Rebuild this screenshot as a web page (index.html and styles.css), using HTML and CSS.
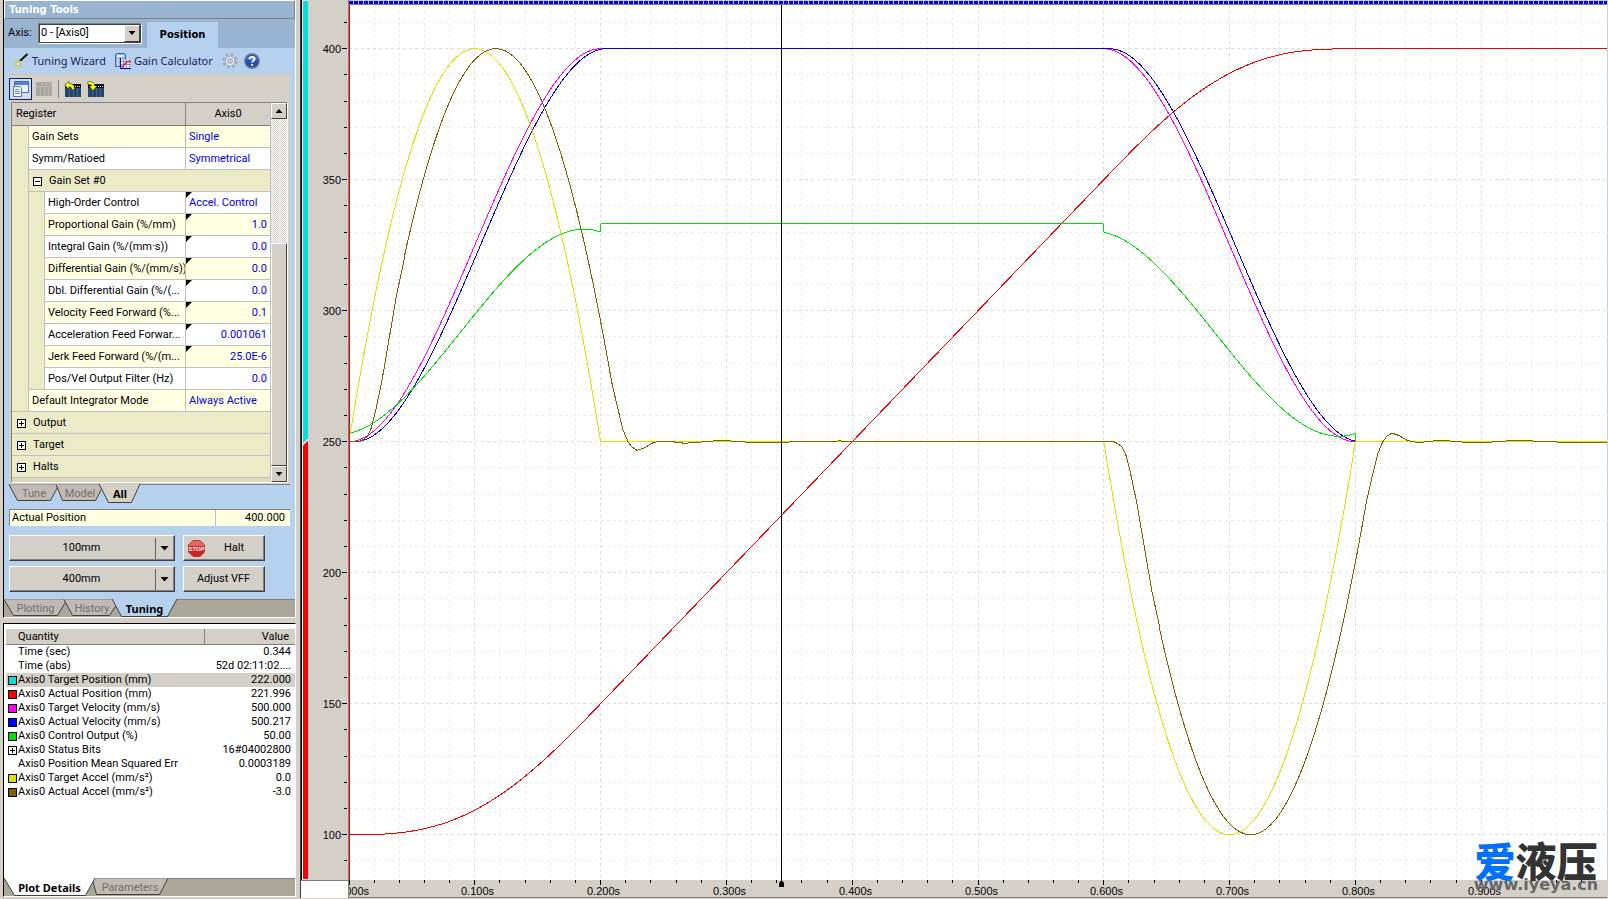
FILE: index.html
```html
<!DOCTYPE html>
<html lang="en">
<head>
<meta charset="utf-8">
<title>Tuning Tools</title>
<link rel="stylesheet" href="styles.css">
</head>
<body>
<div class="app">
  <aside class="side">
    <section class="panel tuning">
      <h1 class="title">Tuning Tools</h1>
      <div class="axis-bar">
        <label for="axis">Axis:</label>
        <span class="combo">
          <select id="axis"><option>0 - [Axis0]</option></select>
          <span class="combo-arrow"><i class="down"></i></span>
        </span>
        <button class="mode-tab">Position</button>
      </div>
      <div class="links">
        <button class="link">
          <svg width="16" height="16" viewBox="0 0 16 16"><path d="M7 8L14.500 1" stroke="#111" stroke-width="2"/><path d="M5 7v8M1 11h8M2 8l6 6M8 8l-6 6" stroke="#d8c21c"/><path d="M4 10h2v2H4z" fill="#fff9a8"/></svg>
          Tuning Wizard
        </button>
        <button class="link">
          <svg width="16" height="16" viewBox="0 0 16 16"><path d="M.5 1.500l1-1h8l1 1v12h-10z" fill="#8db0e0" stroke="#4068b0"/><path d="M2 2h7v2H2z" fill="#f4f8ff"/><path d="M2 6h2M5 6h2M2 8h2M2 10h2M2 12h2" stroke="#fff"/><path d="M5.500 6.500h10v8h-10z" fill="#fff"/><path d="M5.500 5v10.500H16M5 8.500h11M5 11.500h11M8.500 6v9M11.500 6v9M14.500 6v9" stroke="#8c8ce0" fill="none"/><path d="M5 13.500h3l3-4 2-1h3" stroke="#d01818" stroke-width="1.300" fill="none"/><path d="M5.500 5v10.500H16" stroke="#0000c8" fill="none"/></svg>
          Gain Calculator
        </button>
        <button class="tool" aria-label="Options">
          <svg width="16" height="16" viewBox="0 0 16 16"><circle cx="8" cy="8" r="6.500" fill="none" stroke="#a2a9b4" stroke-width="2.500" stroke-dasharray="2.600 2.500"/><circle cx="8" cy="8" r="4.800" fill="#e8ecf2" stroke="#a2a9b4"/><circle cx="8" cy="8" r="2.400" fill="#b5d1ee" stroke="#a2a9b4"/></svg>
        </button>
        <button class="tool" aria-label="Help">
          <svg width="16" height="16" viewBox="0 0 16 16"><circle cx="8" cy="8" r="7.300" fill="#2450b0" stroke="#7c8698" stroke-width="1.400"/><path d="M2.500 6a6 5 0 0 1 11 0q-5 2-11 0z" fill="#5b86dc"/><path d="M5.600 6.200q.2-2.300 2.500-2.300 2.400.1 2.400 2 0 1.200-1.300 1.900-1 .6-1 1.700M8.100 11v1.800" fill="none" stroke="#fff" stroke-width="1.900"/></svg>
        </button>
      </div>
      <div class="register">
        <div class="toolbar">
          <button class="tool on" aria-label="Tree view">
            <svg width="17" height="16" viewBox="0 0 17 16"><path d="M2.500.5h14v11h-14z" fill="#eef4fc" stroke="#3d6cc0"/><path d="M3 1h13v3H3z" fill="#4f86dc"/><path d="M1.500 5.500h6l2 2v8h-8z" fill="#f4f6fa" stroke="#5a79ac"/><path d="M3 8.500h4M3 10.500h5M3 12.500h5" stroke="#7088a8"/></svg>
          </button>
          <button class="tool" aria-label="Plot view" disabled>
            <svg width="17" height="14" viewBox="0 0 17 14"><path d="M1 0h16v14H1z" fill="#a8a6a2"/><path d="M1 4.500h16M5.500 4v10M9.500 4v10M13.500 4v10" stroke="#bab7b2"/><path d="M7 2h1M11 2h1M15 2h1" stroke="#eee"/></svg>
          </button>
          <i class="sep"></i>
          <button class="tool" aria-label="Upload">
            <svg width="17" height="16" viewBox="0 0 17 16"><path d="M1 3h16v13H1z" fill="#24466c"/><path d="M5.500 7v9M9.500 7v9M13.500 7v9" stroke="#3f6894"/><path d="M1 3h16v4H1z" fill="#111"/><path d="M11 5.500h1M13 5.500h1M15 5.500h1" stroke="#ddd"/><path d="M.6 4.300L5 .4V2.700q6-.5 5.500 6H7.700q0-3.300-2.700-3v2.500z" fill="#ff0" stroke="#222" stroke-width=".5"/></svg>
          </button>
          <button class="tool" aria-label="Download">
            <svg width="17" height="16" viewBox="0 0 17 16"><path d="M1 3h16v13H1z" fill="#24466c"/><path d="M5.500 7v9M9.500 7v9M13.500 7v9" stroke="#3f6894"/><path d="M1 3h16v4H1z" fill="#111"/><path d="M11 5.500h1M13 5.500h1M15 5.500h1" stroke="#ddd"/><path d="M.8.6Q7.700 0 7.700 5h2.500L6 9.400 2 5h2.700Q5 3.200.8 3.400z" fill="#ff0" stroke="#222" stroke-width=".5"/></svg>
          </button>
        </div>
        <div class="grid-frame">
          <table class="regs">
            <colgroup><col class="c-first"><col class="c-ind"><col><col class="c-val"></colgroup>
            <thead><tr><th colspan="3">Register</th><th class="mid">Axis0</th></tr></thead>
            <tbody>
              <tr class="odd"><td class="ind" rowspan="13"></td><td colspan="2">Gain Sets</td><td class="val">Single</td></tr>
              <tr><td colspan="2">Symm/Ratioed</td><td class="val">Symmetrical</td></tr>
              <tr><td class="group" colspan="3"><button class="twist minus" aria-label="Collapse"></button>Gain Set #0</td></tr>
              <tr><td class="ind" rowspan="9"></td><td>High-Order Control</td><td class="val mark">Accel. Control</td></tr>
              <tr class="odd"><td>Proportional Gain (%/mm)</td><td class="val num mark">1.0</td></tr>
              <tr><td>Integral Gain (%/(mm·s))</td><td class="val num mark">0.0</td></tr>
              <tr class="odd"><td>Differential Gain (%/(mm/s))</td><td class="val num mark">0.0</td></tr>
              <tr><td>Dbl. Differential Gain (%/(...</td><td class="val num mark">0.0</td></tr>
              <tr class="odd"><td>Velocity Feed Forward (%...</td><td class="val num mark">0.1</td></tr>
              <tr><td>Acceleration Feed Forwar...</td><td class="val num mark">0.001061</td></tr>
              <tr class="odd"><td>Jerk Feed Forward (%/(m...</td><td class="val num mark">25.0E-6</td></tr>
              <tr><td>Pos/Vel Output Filter (Hz)</td><td class="val num">0.0</td></tr>
              <tr class="odd"><td colspan="2">Default Integrator Mode</td><td class="val">Always Active</td></tr>
              <tr><td class="group" colspan="4"><button class="twist" aria-label="Expand"></button>Output</td></tr>
              <tr><td class="group" colspan="4"><button class="twist" aria-label="Expand"></button>Target</td></tr>
              <tr><td class="group" colspan="4"><button class="twist" aria-label="Expand"></button>Halts</td></tr>
            </tbody>
          </table>
          <div class="scroll">
            <button class="sbtn" aria-label="Scroll up"><i class="up"></i></button>
            <div class="track"></div>
            <div class="thumb"></div>
            <button class="sbtn" aria-label="Scroll down"><i class="down"></i></button>
          </div>
        </div>
      </div>
      <div class="sheets inner">
        <button class="sheet w50"><svg width="50" height="18"><path class="off" d="M0 .5L8.500 16.500H41.500L50 .5"/></svg><span>Tune</span></button>
        <button class="sheet w48"><svg width="48" height="18"><path class="off" d="M0 .5L6.500 16.500H39.500L48 .5"/></svg><span>Model</span></button>
        <button class="sheet w42 active"><svg width="42" height="20"><path class="grey" d="M0 0L9.500 18.500H32.500L41 0"/></svg><span>All</span></button>
      </div>
      <div class="readout"><span>Actual Position</span><output>400.000</output></div>
      <div class="actions">
        <button class="push split"><span>100mm</span><i class="bar"></i><i class="down big"></i></button>
        <button class="push halt">
          <svg width="17" height="17" viewBox="0 0 17 17"><path d="M5 .5h7L16.500 5v7L12 16.500H5L.5 12V5z" fill="#d82020" stroke="#a84040"/><path d="M5 1h7l4 4v1H1V5z" fill="#ea6464"/><text class="stop" x="8.500" y="11">STOP</text></svg>
          <span>Halt</span>
        </button>
        <button class="push split"><span>400mm</span><i class="bar"></i><i class="down big"></i></button>
        <button class="push"><span>Adjust VFF</span></button>
      </div>
      <div class="sheets strip">
        <button class="sheet w63"><svg width="63" height="18"><path class="off" d="M0 .5L9.500 16.500H53.500L63 .5"/></svg><span>Plotting</span></button>
        <button class="sheet w56"><svg width="56" height="18"><path class="off" d="M0 .5L8.500 16.500H45.500L56 .5"/></svg><span>History</span></button>
        <button class="sheet w65 active"><svg width="65" height="18"><path class="blue" d="M0 0L9.500 17.500H55.500L65 0"/></svg><span>Tuning</span></button>
      </div>
    </section>

    <section class="panel details">
      <table class="quant">
        <colgroup><col class="q-ico"><col><col class="q-val"></colgroup>
        <thead><tr><th colspan="2">Quantity</th><th class="right">Value</th></tr></thead>
        <tbody>
          <tr><td></td><td>Time (sec)</td><td class="right">0.344</td></tr>
          <tr><td></td><td>Time (abs)</td><td class="right">52d 02:11:02....</td></tr>
          <tr class="sel"><td><i class="chip cyan"></i></td><td>Axis0 Target Position (mm)</td><td class="right">222.000</td></tr>
          <tr><td><i class="chip red"></i></td><td>Axis0 Actual Position (mm)</td><td class="right">221.996</td></tr>
          <tr><td><i class="chip magenta"></i></td><td>Axis0 Target Velocity (mm/s)</td><td class="right">500.000</td></tr>
          <tr><td><i class="chip blue"></i></td><td>Axis0 Actual Velocity (mm/s)</td><td class="right">500.217</td></tr>
          <tr><td><i class="chip green"></i></td><td>Axis0 Control Output (%)</td><td class="right">50.00</td></tr>
          <tr><td><button class="twist" aria-label="Expand"></button></td><td>Axis0 Status Bits</td><td class="right">16#04002800</td></tr>
          <tr><td></td><td>Axis0 Position Mean Squared Err</td><td class="right">0.0003189</td></tr>
          <tr><td><i class="chip yellow"></i></td><td>Axis0 Target Accel (mm/s²)</td><td class="right">0.0</td></tr>
          <tr><td><i class="chip brown"></i></td><td>Axis0 Actual Accel (mm/s²)</td><td class="right">-3.0</td></tr>
        </tbody>
      </table>
      <div class="sheets strip">
        <button class="sheet w91 active"><svg width="91" height="18"><path class="white" d="M0 0L10.500 17.500H81.500L91 0"/></svg><span>Plot Details</span></button>
        <button class="sheet w76"><svg width="76" height="18"><path class="off" d="M0 .5L4.500 16.500H67.500L76 .5"/></svg><span>Parameters</span></button>
      </div>
    </section>
  </aside>

  <main class="chart">
    <div class="bands"><i class="band top"></i><i class="band bottom"></i></div>
    <svg class="y-axis" id="yaxis"></svg>
    <div class="plot-col">
      <div class="samples"></div>
      <svg class="plot" id="plot"></svg>
    </div>
    <div class="corner"></div>
    <svg class="x-axis" id="xaxis"></svg>
    <div class="logo"><div class="logo-cn"><b>爱</b>液压</div><div class="logo-url">www.iyeya.cn</div></div>
  </main>
</div>
<script src="plot.js"></script>
</body>
</html>
```

FILE: styles.css
```css
* { box-sizing: border-box; }
html, body { height: 100%; }
body {
  margin: 0;
  background: #d4d0c8;
  color: #000;
  font: 11px/14px Roboto, "Noto Sans", sans-serif;
  overflow: hidden;
}
button, select, output { font: inherit; color: inherit; }
button { padding: 0; border: 0; background: none; }
svg { display: block; }
.app { display: flex; height: 100vh; }

/* left column */
.side { flex: none; width: 300px; padding: 0 4px 0 3px; display: flex; flex-direction: column; gap: 5px; }
.panel { border-left: 1px solid #000; border-right: 1px solid #fff; border-bottom: 1px solid #fff; display: flex; flex-direction: column; }
.tuning { background: #b5d1ee; }
.details { flex: 1; background: #fff; border-top: 1px solid #000; min-height: 0; margin-bottom: 2px; }
.title {
  margin: 0; height: 19px; padding: 0 4px; background: #99b4d1; color: #fff;
  border: 1px solid #fff; border-right-color: #808080; border-bottom-color: #808080;
  font-size: 10px; font-weight: bold; line-height: 18px; font-family: "DejaVu Sans", sans-serif;
}
.axis-bar { height: 29px; background: #99b4d1; display: flex; align-items: center; padding: 0 0 1px 4px; }
.axis-bar label { width: 30px; }
.combo { position: relative; width: 104px; height: 21px; }
.combo select {
  width: 100%; height: 100%; appearance: none; border: 1px solid; border-color: #808080 #fff #fff #808080;
  outline: 1px solid #404040; outline-offset: -2px; background: #fff; padding: 0 2px; border-radius: 0;
}
.combo-arrow {
  position: absolute; right: 2px; top: 2px; bottom: 2px; width: 16px; pointer-events: none;
  display: grid; place-items: center; background: #d4d0c8;
  border: 1px solid; border-color: #fff #404040 #404040 #fff;
}
.mode-tab { align-self: flex-end; height: 26px; width: 71px; margin: 0 0 -1px 5px; background: #b5d1ee; font-weight: bold; font-family: "DejaVu Sans", sans-serif; font-size: 10px; }
.down, .up { display: block; width: 7px; height: 4px; background: #000; clip-path: polygon(0 0, 100% 0, 50% 100%); }
.up { clip-path: polygon(50% 0, 100% 100%, 0 100%); }
.down.big { width: 9px; height: 5px; }
.links { height: 27px; margin: 0 5px; display: flex; align-items: center; padding-left: 4px; gap: 9px; border-bottom: 1px solid #c8c4b8; }
.link { display: flex; align-items: center; gap: 3px; font: 11px/16px "Noto Sans", sans-serif; color: #1c1c5c; white-space: nowrap; }
.links .tool { width: 16px; height: 16px; }
.links .tool + .tool { margin-left: -3px; }

/* register grid */
.register { margin: 0 5px; background: #d4d0c8; padding: 2px 2px 1px; border-bottom: 1px solid #808080; }
.toolbar { display: flex; align-items: center; height: 25px; margin-left: -2px; padding-bottom: 1px; }
.toolbar .tool { width: 23px; height: 22px; display: grid; place-items: center; }
.toolbar .on { border: 1px solid #0a246a; background: #d9dbe4; }
.sep { width: 1px; height: 18px; margin: 0 2px 0 3px; background: #808080; }
.grid-frame { display: flex; border: 1px solid #808080; border-right-color: #fff; border-bottom-color: #fff; height: 381px; background: #dcdabc; }
.regs { flex: 1; border-collapse: separate; border-spacing: 0; table-layout: fixed; align-self: flex-start; width: 0; }
.c-first { width: 17px; }
.c-ind { width: 16px; }
.c-val { width: 85px; }
.regs th { height: 23px; background: #d4d0c8; font-weight: normal; text-align: left; padding: 0 4px; border-bottom: 1px solid #808080; border-right: 1px solid #808080; }
.regs th.mid { text-align: center; border-right: 1px solid #c0c0c0; }
.regs td { height: 22px; padding: 0 0 0 3px; background: #fff; border-bottom: 1px solid #c0c0c0; border-right: 1px solid #c0c0c0; white-space: nowrap; overflow: hidden; }
.regs .odd td { background: #ffffe1; }
.regs td.ind, .regs .odd td.ind, .regs td.group { background: #ebebc8; }
.regs td.val { color: #0000f0; position: relative; }
.regs td.num { text-align: right; padding-right: 3px; }
.mark::before { content: ""; position: absolute; left: 0; top: 0; width: 6px; height: 6px; background: #000; clip-path: polygon(0 0, 100% 0, 0 100%); }
.twist { width: 9px; height: 9px; border: 1px solid #000; background: linear-gradient(#000, #000) center / 5px 1px no-repeat, linear-gradient(#000, #000) center / 1px 5px no-repeat, #fff; display: inline-block; vertical-align: -1px; }
.twist.minus { background: linear-gradient(#000, #000) center / 5px 1px no-repeat, #fff; }
.group .twist { margin: 0 7px 0 1px; }
.group[colspan="4"] { padding-left: 4px; }
.scroll { width: 16px; display: flex; flex-direction: column; background: #d4d0c8; }
.sbtn, .thumb { background: #d4d0c8; border: 1px solid; border-color: #fff #404040 #404040 #fff; }
.sbtn { height: 16px; flex: none; display: grid; place-items: center; }
.track { flex: 125; background: repeating-conic-gradient(#fff 0 25%, #d4d0c8 0 50%) 0 0 / 2px 2px; }
.thumb { flex: 223; }

/* sheet tabs */
.sheets { display: flex; height: 18px; flex: none; }
.sheets.inner { margin-left: 5px; }
.sheets.strip { background: #aca899; border-top: 1px solid #808080; }
.sheet { position: relative; height: 18px; color: #707070; }
.sheet svg { position: absolute; left: 0; top: -1px; overflow: visible; }
.sheet span { position: relative; }
.sheet + .sheet { margin-left: -3px; }
.sheet.active { color: #000; font-weight: bold; font-family: "Noto Sans", sans-serif; z-index: 1; }
.sheet path { stroke: #404040; }
.off { fill: #c0bab2; }
.grey { fill: #d4d0c8; }
.blue { fill: #b5d1ee; }
.white { fill: #fff; }
.w42 { width: 42px; } .w48 { width: 48px; } .w50 { width: 50px; } .w56 { width: 56px; }
.w63 { width: 63px; } .w65 { width: 65px; } .w76 { width: 76px; } .w91 { width: 91px; }
.sheet.w65 { margin-left: -8px; }
.sheet.w42 { margin-left: -5px; }

.readout { display: flex; height: 17px; margin: 6px 5px 0; background: #ffffe1; border-top: 1px solid #808080; border-left: 1px solid #808080; line-height: 15px; }
.readout span { flex: 1; padding-left: 2px; }
.readout output { width: 75px; border-left: 1px solid #c0c0c0; text-align: right; padding-right: 5px; }
.actions { display: grid; grid-template-columns: 166px 82px; gap: 5px 8px; margin: 9px 5px 7px; }
.push { height: 26px; background: #d4d0c8; border: 1px solid; border-color: #fff #404040 #404040 #fff; box-shadow: inset -1px -1px #808080; display: flex; align-items: center; padding: 0 5px 0 4px; }
.push span { flex: 1; }
.push.split span { padding-right: 6px; }
.push.halt span { padding-left: 4px; }
.push .bar { width: 1px; height: 21px; background: #606060; margin-right: 4px; }
.stop { font: bold 6px "Liberation Sans", sans-serif; fill: #fff; text-anchor: middle; }

/* quantity list */
.quant { border-collapse: separate; border-spacing: 0; table-layout: fixed; width: auto; margin: 5px 0 0 2px; line-height: 14px; }
.quant thead { line-height: 15px; }
.quant th { background: #d4d0c8; font-weight: normal; text-align: left; padding: 0 0 0 12px; border-bottom: 1px solid #808080; height: 16px; }
.quant th.right { padding-right: 6px; border-left: 1px solid #808080; }
.quant td { padding: 0; height: 14px; white-space: nowrap; }
.quant .right { text-align: right; padding-right: 4px; }
.quant td .twist { display: block; margin-left: 2px; }
.q-ico { width: 12px; }
.q-val { width: 91px; }
.sel td { background: #d4d0c8; }
.chip { display: block; width: 9px; height: 9px; border: 1px solid #000; margin-left: 2px; }
.cyan { background: #00e0e0; } .red { background: #f00; } .magenta { background: #f0f; }
.chip.blue { background: #00f; } .green { background: #00e000; } .yellow { background: #e0e000; } .brown { background: #806000; }
.details .strip { margin-top: auto; }

/* chart */
.chart { position: relative; flex: 1; min-width: 0; display: grid; grid-template-columns: 7px 40px 1fr; grid-template-rows: 1fr 18px; border-left: 1px solid #404040; border-right: 1px solid #d4d0c8; margin-bottom: 1px; }
.bands { border-left: 1px solid #000; background: #fff; padding: 1px 0 1px 1px; display: flex; flex-direction: column; }
.band.top { flex: 441; background: #00e0e0; clip-path: polygon(0 0, 100% 0, 100% calc(100% - 5px), 0 100%); }
.band.bottom { flex: 437; background: #f00; margin-top: -3px; clip-path: polygon(0 5px, 100% 0, 100% 100%, 0 100%); }
.y-axis { width: 100%; height: 100%; background: #d4d0c8; }
.plot-col { display: flex; flex-direction: column; min-width: 0; border-left: 1px solid #808080; background: #fff; }
.samples { height: 5px; flex: none; border-top: 1px solid #d4d0c8; border-bottom: 1px solid #808080; background: repeating-linear-gradient(90deg, #00f 0 4px, #d4d0c8 4px 5px); }
.plot { width: 100%; flex: 1; min-height: 0; }
.corner { grid-column: 1 / 3; background: #fff; border-top: 1px solid #808080; }
.x-axis { width: 100%; height: 100%; border-left: 1px solid #808080; border-bottom: 1px solid #808080; overflow: hidden; }
.major { stroke: #dcdcdc; stroke-dasharray: 3 3; }
.minor { stroke: #ececec; stroke-dasharray: 3 3; }
.tick, .cursor { stroke: #000; }
.curve { fill: none; stroke-width: 1; }
.plot, .tick { shape-rendering: crispEdges; }
.axis-text { font: 11px "Liberation Sans", Arial, sans-serif; fill: #000; }
.logo { position: absolute; right: 8px; bottom: 7px; width: 126px; text-align: center; color: #333; }
.logo-cn { font: 900 41px/40px "Noto Sans CJK SC", sans-serif; white-space: nowrap; }
.logo-cn b { color: #0070ff; font-weight: 900; }
.logo-url { font: bold 16px/12px "DejaVu Sans", sans-serif; color: #666; }
```

FILE: plot.js
```js
const NS = 'http://www.w3.org/2000/svg';
const Y_MAX = 416.7, Y_MIN = 82.7, CURSOR = 0.3436;

function add(svg, tag, attrs, text) {
  const node = document.createElementNS(NS, tag);
  for (const key in attrs) node.setAttribute(key, attrs[key]);
  if (text) node.textContent = text;
  svg.appendChild(node);
}

// Motion profile: 0.2 s ramp up, 0.4 s cruise, 0.2 s ramp down
const clamp = u => Math.min(1, Math.max(0, u));
const ramp = u => 3 * u * u - 2 * u * u * u;
const dome = u => 4 * u * (1 - u);
const up = t => clamp(t / 0.2);
const down = t => clamp((t - 0.6) / 0.2);
const velocity = t => 250 + 150 * (ramp(up(t)) - ramp(down(t)));
const accel = t => 250 + 150 * (dome(up(t)) - dome(down(t)));
const rampArea = u => 100 * (u * u * u - u * u * u * u / 2);
const position = t => 100 + rampArea(up(t)) + 500 * Math.min(0.4, Math.max(0, t - 0.2)) +
  100 * down(t) - rampArea(down(t));
function output(t) {
  const jerk = (t < 0.2 ? 1 - 2 * up(t) : 0) - (t >= 0.6 && t < 0.8 ? 1 - 2 * down(t) : 0);
  return 250 + 83.2 * (ramp(up(t)) - ramp(down(t))) + 7 * (dome(up(t)) - dome(down(t))) + 3.2 * jerk;
}

const lead = [[0, 0], [.008, 0], [.011, .7], [.0145, 2], [.0175, 5], [.021, 11.5], [.0262, 23.3], [.0325, 41], [.038, 56.5], [.0441, 70]];
const tail = [[.2087, 23], [.213, 14], [.2178, 4.5], [.2218, 0], [.2248, -2], [.229, -3.3], [.235, -2.3], [.2415, -.4], [.249, .3], [.257, 0],
  [.267, -.6], [.277, -.2], [.29, .3], [.303, .3], [.32, -.3], [.34, -.3], [.36, .1], [.39, .3], [.4, .1]];
function table(rows, t) {
  for (let i = 1; i < rows.length; i++) {
    if (t <= rows[i][0]) {
      const [a, b] = [rows[i - 1], rows[i]];
      return a[1] + (b[1] - a[1]) * (t - a[0]) / (b[0] - a[0]);
    }
  }
  return 0;
}
function response(t) {
  if (t < 0) return 0;
  if (t < .0441) return table(lead, t);
  return t < .2087 ? 150 * dome((t - .0167) / .2) : table(tail, t);
}
const accelActual = t => 250 + response(t) - response(t - 0.6);

const curves = [
  ['#00e0e0', position], ['#f00000', position], ['#ff00ff', velocity],
  ['#0000e8', t => velocity(t - 0.0045)], ['#00e000', output],
  ['#e0e000', accel], ['#806000', accelActual]
];

function draw() {
  const plot = document.getElementById('plot');
  const yaxis = document.getElementById('yaxis');
  const xaxis = document.getElementById('xaxis');
  [plot, yaxis, xaxis].forEach(s => s.replaceChildren());
  const w = plot.clientWidth, h = plot.clientHeight;
  const px = t => t * w;
  const py = v => (Y_MAX - v) / (Y_MAX - Y_MIN) * h;
  const snap = n => Math.floor(n) + 0.5;

  for (let i = 0; i < 50; i++) {
    const x = snap(px(i * 0.02)), major = i % 5 === 0;
    if (i) add(plot, 'line', { x1: x, x2: x, y1: 0, y2: h, class: major ? 'major' : 'minor' });
    add(xaxis, 'line', { x1: x, x2: x, y1: 0, y2: major ? 5 : 3, class: 'tick' });
    if (major) add(xaxis, 'text', { x: x + 3, y: 15, 'text-anchor': 'middle', class: 'axis-text' }, (i * 0.02).toFixed(3) + 's');
  }
  for (let v = 90; v <= 410; v += 10) {
    const y = snap(py(v)), major = v % 50 === 0;
    add(plot, 'line', { x1: 0, x2: w, y1: y, y2: y, class: major ? 'major' : 'minor' });
    add(yaxis, 'line', { x1: major ? 34 : 36, x2: 39, y1: y + 5, y2: y + 5, class: 'tick' });
    if (major) add(yaxis, 'text', { x: 33, y: y + 9, 'text-anchor': 'end', class: 'axis-text' }, String(v));
  }
  for (const [color, fn] of curves) {
    const pts = [];
    for (let x = 0; x <= w; x++) pts.push(x + ',' + py(fn(x / w)).toFixed(1));
    add(plot, 'polyline', { points: pts.join(' '), stroke: color, class: 'curve' });
  }
  add(plot, 'line', { x1: 0.5, x2: 0.5, y1: 0, y2: h, stroke: '#f00000' });
  const c = snap(px(CURSOR));
  add(plot, 'line', { x1: c, x2: c, y1: 0, y2: h, class: 'cursor' });
  add(xaxis, 'path', { d: `M${c - 2.5} 7V3L${c} 0L${c + 2.5} 3V7Z` });
}
draw();
addEventListener('resize', draw);
```
